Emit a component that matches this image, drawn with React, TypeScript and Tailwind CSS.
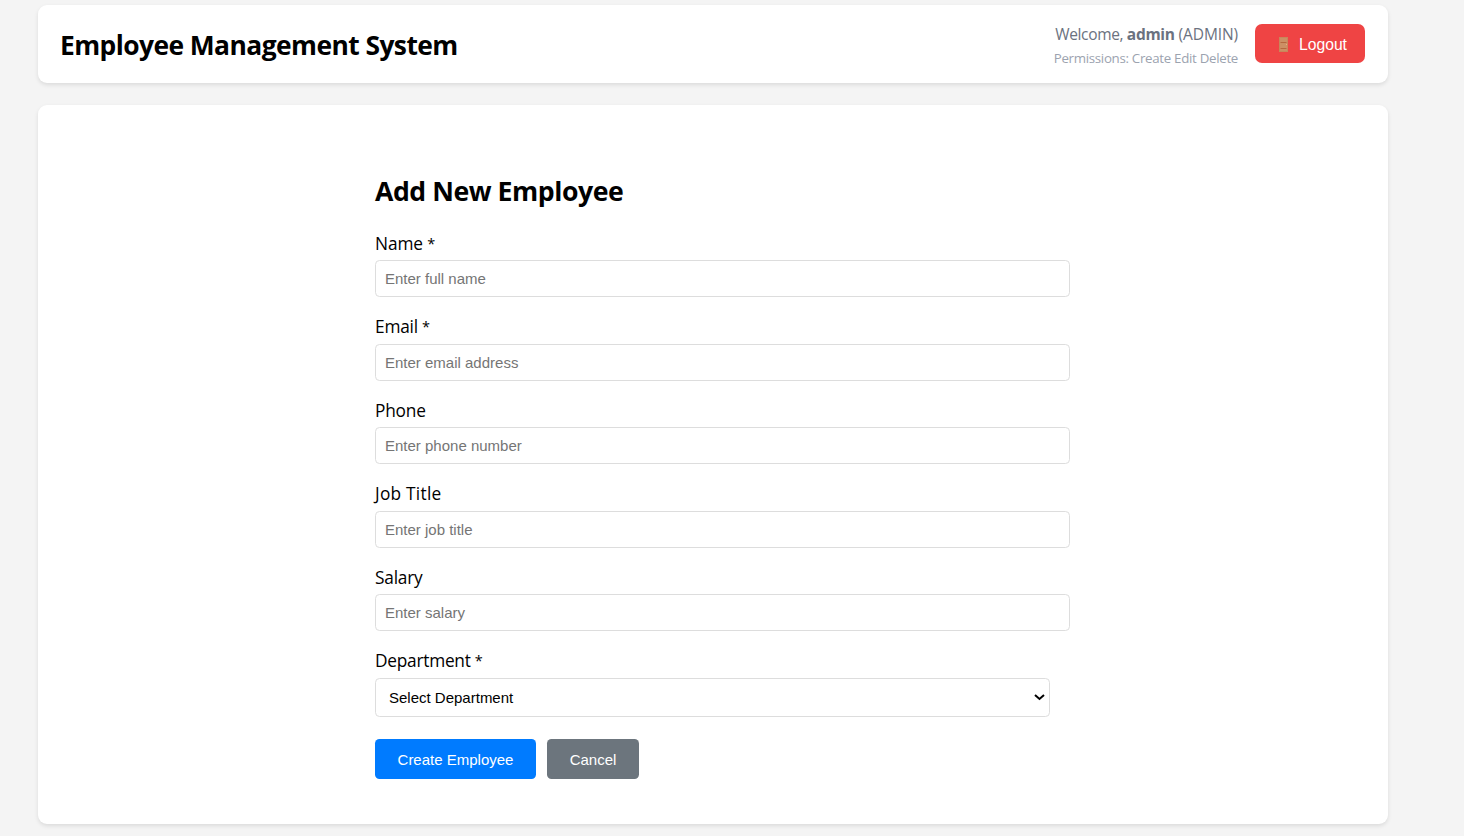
import { useState } from "react";

const fields = [
  { id: "name", label: "Name", required: true, placeholder: "Enter full name", track: "tracking-[-0.1px]" },
  { id: "email", label: "Email", required: true, placeholder: "Enter email address", track: "tracking-[-0.2px]" },
  { id: "phone", label: "Phone", required: false, placeholder: "Enter phone number", track: "tracking-[-0.2px]" },
  { id: "jobTitle", label: "Job Title", required: false, placeholder: "Enter job title", track: "tracking-[0.25px]" },
  { id: "salary", label: "Salary", required: false, placeholder: "Enter salary", track: "tracking-[-0.2px]" },
];

const ui = "font-['Liberation_Sans',Arial,sans-serif]";

function DoorIcon() {
  return (
    <svg width="9" height="15" viewBox="0 0 9 15" aria-hidden="true">
      <rect width="9" height="15" fill="#c9855a" />
      <rect x="1" y="1" width="7" height="13" fill="#cc8f64" />
      <path d="M1.5 5.5h6M1.5 11.5h6" stroke="#b5673f" strokeWidth="1" />
      <rect x="7" y="7" width="1" height="1" fill="#e8b07c" />
    </svg>
  );
}

function Required() {
  return <span className="relative -top-px ml-[0.6px] text-[14.5px] leading-none"> *</span>;
}

function Header() {
  return (
    <header className="flex h-[78px] items-center justify-between rounded-[9px] bg-white pl-[22px] pr-[23px] shadow-[0_2px_4px_rgba(0,0,0,0.1)]">
      <h1 className="pt-px text-[26.4px] font-bold leading-9 tracking-[-0.56px] text-black">
        Employee Management System
      </h1>
      <div className="flex h-10 items-start gap-[17px]">
        <div className="-mt-px text-right">
          <div className="whitespace-nowrap text-[15.5px] leading-[23px] tracking-[-0.1px] text-[#6b7280]">
            <span className="tracking-[-0.35px]">Welcome, </span>
            <strong className="font-bold tracking-[-0.3px]">admin</strong> (ADMIN)
          </div>
          <div className="whitespace-nowrap text-[13.3px] leading-[24px] tracking-[-0.3px] text-[#9ca3af]">
            Permissions: Create Edit Delete
          </div>
        </div>
        <button
          type="button"
          className={`flex h-[39px] w-[110px] items-center rounded-[7px] bg-[#ef4444] pl-[24px] pt-[2px] text-[15.7px] text-white ${ui}`}
        >
          <DoorIcon />
          <span className="ml-[11px]">Logout</span>
        </button>
      </div>
    </header>
  );
}

function EmployeeForm() {
  const [values, setValues] = useState<Record<string, string>>({});
  return (
    <form className="w-[695px]" onSubmit={(e) => e.preventDefault()}>
      <h2 className="mb-[21.6px] text-[26.67px] font-bold leading-9 tracking-[-0.45px] text-black">
        Add New Employee
      </h2>
      {fields.map((f) => (
        <div key={f.id} className="mb-[17px] h-[66.55px]">
          <label
            htmlFor={f.id}
            className={`block h-[29.55px] text-[17.3px] leading-[25px] text-black ${f.track}`}
          >
            {f.label}
            {f.required && <Required />}
          </label>
          <input
            id={f.id}
            placeholder={f.placeholder}
            value={values[f.id] ?? ""}
            onChange={(e) => setValues({ ...values, [f.id]: e.target.value })}
            className={`block h-[37px] w-full rounded-[4.5px] border border-[#dddddd] bg-white px-[9px] text-[15px] text-black outline-none placeholder:text-[#757575] ${ui}`}
          />
        </div>
      ))}
      <label
        htmlFor="department"
        className="block h-[29.55px] text-[17.3px] leading-[25px] tracking-[-0.25px] text-black"
      >
        Department
        <Required />
      </label>
      <div className="relative w-[675px]">
        <select
          id="department"
          defaultValue=""
          className={`block h-[39px] w-full appearance-none rounded-[4.5px] border border-[#dddddd] bg-white px-[13px] pt-[2px] text-[15px] text-black outline-none ${ui}`}
        >
          <option value="">Select Department</option>
        </select>
        <svg
          className="pointer-events-none absolute right-[5px] top-[16px]"
          width="11"
          height="7"
          viewBox="0 0 11 7"
          fill="none"
          aria-hidden="true"
        >
          <path d="M1 1l4.5 4L10 1" stroke="#000" strokeWidth="2" />
        </svg>
      </div>
      <div className="mt-[22px] flex gap-[11px]">
        <button
          type="submit"
          className={`h-10 w-[161px] rounded-[4.5px] bg-[#007bff] pt-[2px] text-[15px] text-white ${ui}`}
        >
          Create Employee
        </button>
        <button
          type="button"
          className={`h-10 w-[92px] rounded-[4.5px] bg-[#6c757d] pt-[2px] text-[15px] text-white ${ui}`}
        >
          Cancel
        </button>
      </div>
    </form>
  );
}

export default function App() {
  return (
    <div className="h-[836px] overflow-hidden bg-[#f4f4f4] pl-[38px] pr-[76px] pt-[5px] font-['Open_Sans','Noto_Sans',sans-serif]">
      <Header />
      <main className="mt-[22px] h-[719px] rounded-[9px] bg-white pl-[337px] pt-[68px] shadow-[0_2px_4px_rgba(0,0,0,0.1)]">
        <EmployeeForm />
      </main>
    </div>
  );
}
